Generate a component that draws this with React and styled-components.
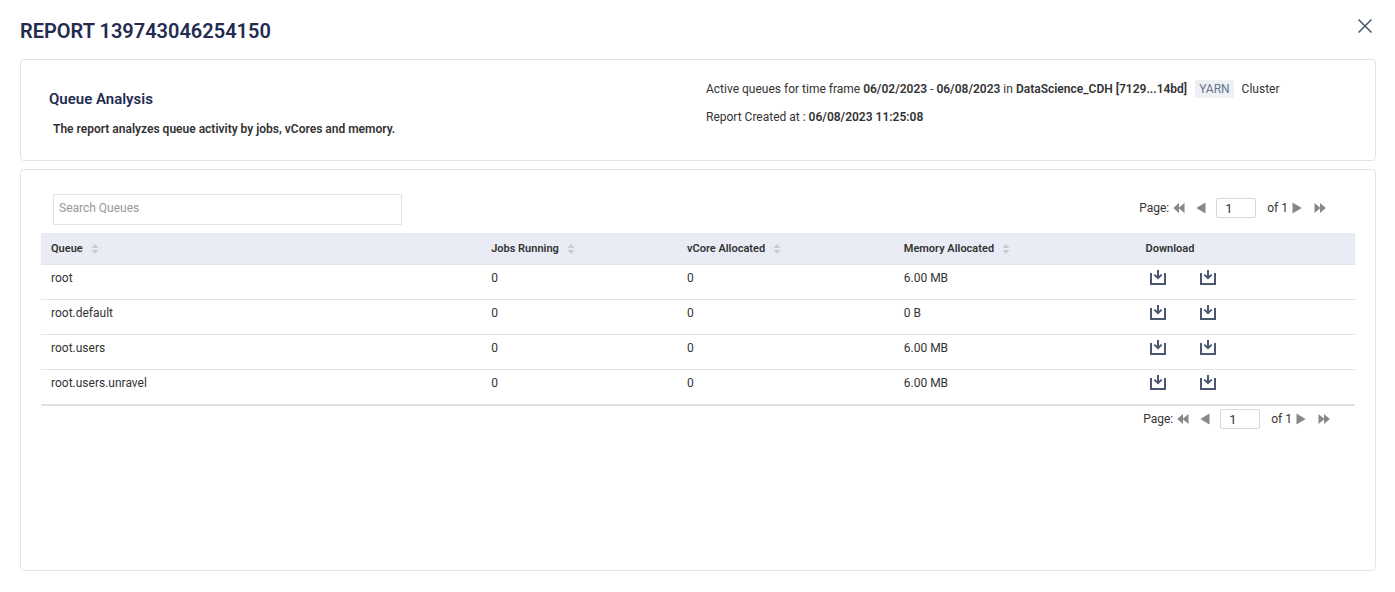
import React, {useState} from 'react'
import styled, {createGlobalStyle} from 'styled-components'


const columns = [
    {label: 'Queue', field: 'queue', width: '33.5%'},
    {label: 'Jobs Running', field: 'jobs', width: '14.9%'},
    {label: 'vCore Allocated', field: 'vcores', width: '16.5%'},
    {label: 'Memory Allocated', field: 'memory', width: '18.4%'},
]

const queues = [
    {queue: 'root', jobs: 0, vcores: 0, memory: '6.00 MB'},
    {queue: 'root.default', jobs: 0, vcores: 0, memory: '0 B'},
    {queue: 'root.users', jobs: 0, vcores: 0, memory: '6.00 MB'},
    {queue: 'root.users.unravel', jobs: 0, vcores: 0, memory: '6.00 MB'},
]

const Download = ({label}) => (
    <DownloadButton aria-label={label}>
        <svg width="16" height="16" viewBox="0 0 16 16" fill="none" stroke="#4b5670" strokeWidth="2">
            <path d="M1 3v11h14V3" />
            <path d="M8 0v8" />
            <path d="M4.300 4.600 8 8.200l3.700-3.600" />
        </svg>
    </DownloadButton>
)

const SortIcon = () => (
    <svg width="8" height="10" viewBox="0 0 8 10" fill="#c9ccd1">
        <path d="M4 0l3.600 4H.4zM4 10L.4 6h7.200z" />
    </svg>
)

const Pager = ({id}) => {
    const [page, setPage] = useState('1')

    return (
        <PagerBar>
            <label htmlFor={id}>Page:</label>
            <PagerButton aria-label="First page" onClick={() => setPage('1')}>
                <svg width="12" height="12" viewBox="0 0 12 12"><path d="M6 1v10L.2 6zM11.500 1v10L5.500 6z" /></svg>
            </PagerButton>
            <PagerButton aria-label="Previous page" $space="11px">
                <svg width="10" height="12" viewBox="0 0 10 12"><path d="M9.500 .5v11L.3 6z" /></svg>
            </PagerButton>
            <PageInput id={id} type="text" value={page} onChange={e => setPage(e.target.value)} />
            <span>of 1</span>
            <PagerButton aria-label="Next page">
                <svg width="10" height="12" viewBox="0 0 10 12"><path d="M.5 .5v11L9.700 6z" /></svg>
            </PagerButton>
            <PagerButton aria-label="Last page" $space="12px">
                <svg width="12" height="12" viewBox="0 0 12 12"><path d="M.5 1v10l6-5zM6 1v10l5.800-5z" /></svg>
            </PagerButton>
        </PagerBar>
    )
}


export default function App()
{
    const [search, setSearch] = useState('')
    const rows = queues.filter(q => q.queue.includes(search))

    return (
        <Page>
            <GlobalStyle />
            <Header>
                <Title>REPORT 139743046254150</Title>
                <CloseButton aria-label="Close">
                    <svg width="14" height="14" viewBox="0 0 14 14" fill="none" stroke="#48566a" strokeWidth="1.5">
                        <path d="M.5.5l13 13M13.500.5l-13 13" />
                    </svg>
                </CloseButton>
            </Header>
            <Summary>
                <div>
                    <Subtitle>Queue Analysis</Subtitle>
                    <Description>The report analyzes queue activity by jobs, vCores and memory.</Description>
                </div>
                <Details>
                    <p>
                        Active queues for time frame <b>06/02/2023</b> - <b>06/08/2023</b> in <b>DataScience_CDH [7129...14bd]</b>
                        <Tag>YARN</Tag>
                        Cluster
                    </p>
                    <p>Report Created at : <b>06/08/2023 11:25:08</b></p>
                </Details>
            </Summary>
            <Results>
                <Toolbar>
                    <SearchInput
                        type="text"
                        aria-label="Search Queues"
                        placeholder="Search Queues"
                        value={search}
                        onChange={e => setSearch(e.target.value)}
                    />
                    <Pager id="page-top" />
                </Toolbar>
                <Table>
                    <thead>
                        <tr>
                            {columns.map(c => (
                                <HeadCell key={c.field} $width={c.width}>
                                    <SortButton>{c.label}<SortIcon /></SortButton>
                                </HeadCell>
                            ))}
                            <HeadCell>Download</HeadCell>
                        </tr>
                    </thead>
                    <tbody>
                        {rows.map(q => (
                            <tr key={q.queue}>
                                {columns.map(c => <Cell key={c.field}>{q[c.field]}</Cell>)}
                                <Cell>
                                    <Downloads>
                                        <Download label={`Download jobs of ${q.queue}`} />
                                        <Download label={`Download resources of ${q.queue}`} />
                                    </Downloads>
                                </Cell>
                            </tr>
                        ))}
                    </tbody>
                </Table>
                <Footer>
                    <Pager id="page-bottom" />
                </Footer>
            </Results>
        </Page>
    )
}


const GlobalStyle = createGlobalStyle`
    * {
        box-sizing: border-box;
    }
    body {
        margin: 0;
        background: #fff;
        color: #333;
        font-family: Roboto, "Liberation Sans", sans-serif;
        font-size: 12px;
        line-height: 16px;
    }
    h1, h2, p {
        margin: 0;
    }
    button, input {
        font: inherit;
        color: inherit;
    }
    button {
        padding: 0;
        border: none;
        background: none;
        cursor: pointer;
    }
`

const Page = styled.main`
    padding: 0 19px 20px 20px;
`
const Header = styled.header`
    display: flex;
    justify-content: space-between;
    align-items: flex-start;
    height: 59px;
    padding-top: 19px;
`
const Title = styled.h1`
    font-size: 20px;
    line-height: 24px;
    font-weight: 600;
    color: #232b50;
`
const CloseButton = styled.button`
    display: flex;
    margin-right: 4px;
`
const Card = styled.section`
    border: 1px solid #e3e4e6;
    border-radius: 4px;
`
const Summary = styled(Card)`
    display: grid;
    grid-template-columns: 1fr 1fr;
    min-height: 102px;
    margin-bottom: 8px;

    > div:first-child {
        padding: 29px 28px 20px;
    }
`
const Subtitle = styled.h2`
    font-size: 15px;
    line-height: 20px;
    font-weight: 600;
    color: #232b50;
`
const Description = styled.p`
    margin-top: 12px;
    padding-left: 4px;
    font-weight: 600;
`
const Details = styled.div`
    display: flex;
    flex-direction: column;
    gap: 10px;
    padding: 20px 8px;

    p {
        line-height: 18px;
    }
    b {
        font-weight: 600;
    }
`
const Tag = styled.span`
    display: inline-block;
    margin: 0 8px;
    padding: 0 4px;
    border-radius: 2px;
    background: #edf0f4;
    color: #64748b;
`
const Results = styled(Card)`
    min-height: calc(100vh - 190px);
    padding: 24px 20px 20px;
`
const Toolbar = styled.div`
    display: flex;
    justify-content: space-between;
    align-items: flex-start;
    padding: 0 29px 8px 12px;

    > div {
        padding-top: 4px;
    }
`
const SearchInput = styled.input`
    width: 349px;
    height: 31px;
    padding: 0 5px 3px;
    border: 1px solid #dfe2ec;
    border-radius: 1px;
    background: #fff;

    &::placeholder {
        color: #999;
    }
`
const PagerBar = styled.div`
    display: flex;
    align-items: center;

    label {
        margin-right: 4px;
    }
    span {
        margin: 0 4px 0 11px;
    }
`
const PagerButton = styled.button`
    display: flex;
    margin-left: ${p => p.$space || 0};

    svg {
        fill: #888;
    }
`
const PageInput = styled.input`
    width: 40px;
    height: 20px;
    margin-left: 10px;
    padding: 0 8px;
    border: 1px solid #d9d9d9;
    border-radius: 2px;
    background: #fff;
    font-size: 13px;
`
const Table = styled.table`
    width: 100%;
    table-layout: fixed;
    border-collapse: separate;
    border-spacing: 0;
    border-bottom: 1px solid #dcdee0;
`
const HeadCell = styled.th`
    width: ${p => p.$width || 'auto'};
    height: 32px;
    padding: 0 10px;
    border-bottom: 1px solid #e2e3e6;
    background: #e9ecf4;
    font-size: 11px;
    font-weight: 600;
    text-align: left;
`
const SortButton = styled.button`
    display: flex;
    align-items: center;
    gap: 8px;
`
const Cell = styled.td`
    height: 35px;
    padding: 5px 10px;
    border-bottom: 1px solid #e2e3e6;
    vertical-align: top;
`
const Downloads = styled.div`
    display: flex;
    gap: 34px;
    padding-left: 4px;
`
const DownloadButton = styled.button`
    display: flex;
`
const Footer = styled.div`
    display: flex;
    justify-content: flex-end;
    padding: 3px 25px 0 0;
`
